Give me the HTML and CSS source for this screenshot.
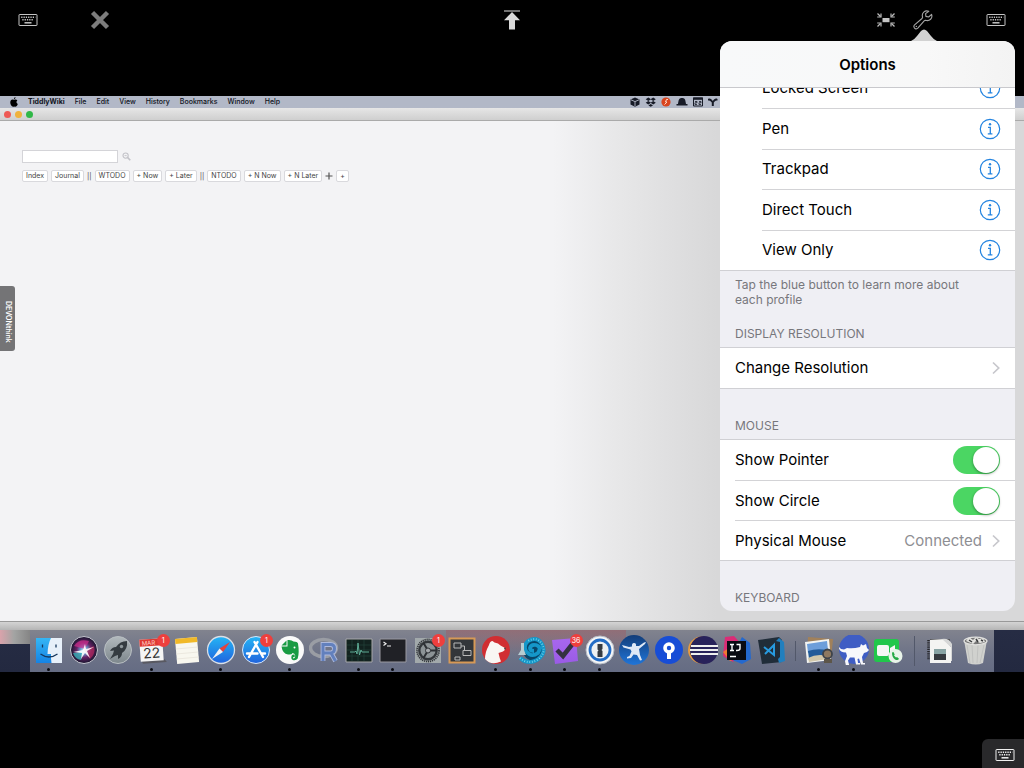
FILE: index.html
```html
<!DOCTYPE html>
<html lang="en">
<head>
<meta charset="utf-8">
<title>Remote desktop</title>
<link rel="stylesheet" href="styles.css">
</head>
<body>
<svg class="defs" aria-hidden="true">
  <defs>
    <symbol id="keyboard" viewBox="0 0 20 14">
      <rect x="1" y="1.500" width="18" height="11" rx=".5" fill="none" stroke="currentColor"/>
      <path d="M3.200 4.200h14" stroke="currentColor" stroke-width="1.400" stroke-dasharray="1.300 1"/>
      <path d="M4.300 6.800h11.500" stroke="currentColor" stroke-width="1.400" stroke-dasharray="1.300 1"/>
      <path d="M6.500 9.800h7" stroke="currentColor" stroke-width="1.500"/>
    </symbol>
    <symbol id="info" viewBox="0 0 22 22">
      <circle cx="11" cy="11" r="9.7" fill="none" stroke="#2484e0" stroke-width="1.2"/>
      <circle cx="11" cy="6.3" r="1.2" fill="#2484e0"/>
      <path d="M9 9.400h2.300v6.300M8.800 15.800h4.600" fill="none" stroke="#2484e0" stroke-width="1.300"/>
    </symbol>
    <symbol id="chevron" viewBox="0 0 8 14">
      <path d="M1 1.500l5.700 5.500L1 12.500" fill="none" stroke="#c7c7cc" stroke-width="1.700"/>
    </symbol>
    <linearGradient id="finderBlue" x2="0" y2="1"><stop stop-color="#35b6f5"/><stop offset="1" stop-color="#1583e4"/></linearGradient>
    <linearGradient id="sky" x2="0" y2="1"><stop stop-color="#25b5f5"/><stop offset="1" stop-color="#2063dd"/></linearGradient>
    <linearGradient id="metal" x2="0" y2="1"><stop stop-color="#b2b9bd"/><stop offset="1" stop-color="#7d878c"/></linearGradient>
    <linearGradient id="violet" x2="0" y2="1"><stop stop-color="#a867ee"/><stop offset="1" stop-color="#9a5be6"/></linearGradient>
    <linearGradient id="navy" x2="0" y2="1"><stop stop-color="#123d79"/><stop offset="1" stop-color="#2075d8"/></linearGradient>
    <radialGradient id="siri"><stop stop-color="#e8fbff"/><stop offset=".25" stop-color="#6a9cd0"/><stop offset=".55" stop-color="#662266"/><stop offset="1" stop-color="#15152c"/></radialGradient>
  </defs>
</svg>

<header class="toolbar">
  <div class="tools tools-left">
    <button class="tool" aria-label="Keyboard"><svg width="20" height="14"><use href="#keyboard"/></svg></button>
    <button class="tool" aria-label="Close"><svg width="20" height="20" viewBox="0 0 20 20"><path d="M2.500 2.500l15 15M17.500 2.500l-15 15" stroke="#7d7d7d" stroke-width="4.400"/></svg></button>
  </div>
  <button class="tool" aria-label="Scroll to top"><svg width="18" height="20" viewBox="0 0 18 20"><path d="M1 1h16" stroke="#8c8c8c" stroke-width="1.600"/><path d="M9 2l8 8.300h-5v9.200H6v-9.200H1z" fill="#dadada"/></svg></button>
  <div class="tools tools-right">
    <button class="tool" aria-label="Fit to screen"><svg width="20" height="16" viewBox="0 0 20 16"><path d="M6.500 6h7v4.200h-7z" fill="#c4c4c4"/><path d="M1.500 1.500l3 3M18.500 1.500l-3 3M1.500 14.500l3-3M18.500 14.500l-3-3" stroke="#bbb" stroke-width="1.300"/><path d="M5 1.500V5H1.200M15 1.500V5h3.800M5 14.500V11H1.200M15 14.500V11h3.800" fill="none" stroke="#bbb" stroke-width="1.200"/></svg></button>
    <button class="tool" aria-label="Options"><svg width="20" height="20" viewBox="0 0 20 20"><path d="M15.800 1.300C12-.2 8.200 3 9.600 7.200L9 8.500 1.600 14.800c-2 2 .9 5.500 3.200 3.400l6.400-7.400 1.400-.5c4 1.200 7.300-2 6-6l-3 2.700-2.700-.6-.3-2.800zM3.200 16.400h.3" fill="none" stroke="#a6a6a6" stroke-width="1.100" stroke-linejoin="round" stroke-linecap="round"/></svg></button>
    <button class="tool tool-last" aria-label="Keyboard options"><svg width="20" height="14"><use href="#keyboard"/></svg></button>
  </div>
</header>

<main class="desktop">
  <nav class="menubar">
    <svg class="apple" width="8" height="10" viewBox="0 0 8 10"><path d="M5.500 0Q5.600 1.700 3.900 2.200 3.800.6 5.500 0M4 2.900C5 2.300 6.500 2.200 7.400 3.500 5.900 4.400 6.300 6.400 7.800 7 7 9.200 6 10.200 4.200 9.500 2.500 10.300 1.400 9.100.6 7.200-.4 4.500 1 1.700 4 2.900z"/></svg>
    <b>TiddlyWiki</b><span>File</span><span>Edit</span><span>View</span><span>History</span><span>Bookmarks</span><span>Window</span><span>Help</span>
    <svg class="status" width="90" height="12" viewBox="0 0 90 12" fill="#171b27">
      <path d="M5 1.500l4.500 2v5L5 10.800.5 8.500v-5z"/><path d="M1 3.800l4 1.800 4-1.800M5 5.600v4.600" stroke="#b5bac8" stroke-width=".9" fill="none"/>
      <path d="M18.300 1.500L21 3.200l-2.700 1.700-2.600-1.700zm4.900 0l2.600 1.700-2.600 1.700L20.600 3.200zm-4.900 3.600L21 6.700l-2.700 1.700-2.600-1.700zm4.900 0l2.600 1.600-2.600 1.700-2.600-1.700zM20.700 8l2.300 1.400-2.300 1.400-2.300-1.400z"/>
      <circle cx="36" cy="6" r="4.600" fill="#d9451e"/><path d="M38 3.500h-1.500L35.500 6H37l-2.500 2.500" fill="none" stroke="#ffd9c8"/>
      <path d="M48 8c.6-4 .8-6 4-6s3.400 2 4 6h1.500v1.500h-11V8z"/>
      <path d="M63.500 2h9v8h-9z" fill="none" stroke="#171b27"/><path d="M63 1.500h10v2.300H63z"/><path d="M65 5.500h2v1.300h-2v1.700h2m2-3h2v1.300h-2v1.700h2" fill="none" stroke="#171b27" stroke-width=".8"/>
      <path d="M78 3c2-1.300 3.500.3 4.800 2 1.200-1.700 2.700-3.300 4.700-2v1.500c-2-.5-3 1-3.700 2V10h-2V6.500c-.8-1-1.800-2.500-3.800-2z"/>
    </svg>
  </nav>
  <div class="titlebar"><i class="dot red"></i><i class="dot amber"></i><i class="dot green"></i></div>
  <section class="wiki">
    <div class="search">
      <input class="search-box" type="text" aria-label="Search">
      <svg width="9" height="9" viewBox="0 0 10 10" fill="none" stroke="#c2c2c8"><circle cx="4" cy="4" r="2.900" stroke-width="1.200"/><path d="M6.300 6.300l2.900 2.900" stroke-width="1.800"/><path d="M2.800 4h2.400"/></svg>
    </div>
    <div class="tags">
      <button class="tag">Index</button><button class="tag">Journal</button><span>||</span>
      <button class="tag">WTODO</button><button class="tag">+ Now</button><button class="tag">+ Later</button><span>||</span>
      <button class="tag">NTODO</button><button class="tag">+ N Now</button><button class="tag">+ N Later</button>
      <svg width="8" height="8" viewBox="0 0 8 8"><path d="M4 .5v7M.5 4h7" stroke="#555" stroke-width="1.200"/></svg>
      <button class="tag">+</button>
    </div>
    <div class="side-tab">DEVONthink</div>
  </section>
  <div class="window-edge"></div>
  <div class="dock-area">
    <div class="dock">
      <div class="app running"><svg viewBox="0 0 30 30"><path d="M2 3h26v25H2z" fill="url(#finderBlue)"/><path d="M17 3h11v25H17.500q-.8-5-.5-9h-3.500q.3-10 3.500-16z" fill="#e7f0fa"/><path d="M8.500 9.500v3M22 9.500v3M6.500 19q8.500 6 17 0" fill="none" stroke="#16365c" stroke-width="1.300"/></svg></div>
      <div class="app"><svg viewBox="0 0 30 30"><circle cx="15" cy="15" r="13.500" fill="url(#siri)" stroke="#c6c6d0"/><path d="M5 11q5-8 15-5l-4 8z" fill="#d32d8e" opacity=".7"/><path d="M25 11q2 8-4 13l-6-9z" fill="#b4285c" opacity=".7"/><path d="M4 18q7 0 11-3l-3 10Q6 24 4 18z" fill="#35c7c8" opacity=".7"/><path d="M4 17l10-2 2-6 1 5 8-2-7 4 3 7-5-5-4 6 1-6z" fill="#fff" opacity=".9"/></svg></div>
      <div class="app"><svg viewBox="0 0 30 30"><circle cx="15" cy="15" r="13.500" fill="url(#metal)" stroke="#b9bfc3"/><path d="M24 6q-7 0-11 6-4 0-6 4l4-.5-1 3.500-3 5 5-3 3-1v4q4-2 4-6 6-4 5-12z" fill="#343b40"/><circle cx="18.500" cy="11.500" r="1.700" fill="#8d969a"/></svg></div>
      <div class="app running"><svg viewBox="0 0 30 30"><g transform="rotate(-4 15 15)"><path d="M4 25h23l2 3H5z" fill="#595961"/><path d="M3 4h23v22H3z" fill="#f5f5f5"/><path d="M3 4h23v7H3z" fill="#df3933"/><text x="12" y="10" class="cal-month">MAR</text><text x="14.500" y="23" class="cal-day">22</text></g></svg><span class="badge">1</span></div>
      <div class="app"><svg viewBox="0 0 30 30"><g transform="rotate(-5 15 15)"><path d="M4 3h22v25H4z" fill="#f8f7ef"/><path d="M4 3h22v5H4z" fill="#f1b928"/><path d="M4 13h22M4 18h22M4 23h22" stroke="#ebe8df"/></g></svg></div>
      <div class="app running"><svg viewBox="0 0 30 30"><circle cx="15" cy="15" r="13.500" fill="url(#sky)" stroke="#d9dfe7" stroke-width="1.300"/><path d="M24 7l-7 10-3.500-3.500z" fill="#e6423c"/><path d="M6 24l7.500-10.500L17 17z" fill="#f2f2f2"/></svg></div>
      <div class="app"><svg viewBox="0 0 30 30"><circle cx="15" cy="15" r="13.500" fill="url(#sky)" stroke="#d9e8fa"/><path d="M13.500 7l8.500 15M16.500 7L8 22M6 18.500h10.500M21 18.500h3" stroke="#fff" stroke-width="2.400" stroke-linecap="round"/></svg><span class="badge">1</span></div>
      <div class="app running"><svg viewBox="0 0 30 30"><circle cx="15" cy="15" r="14" fill="#fafafa"/><path d="M11.500 5.500v5H6.500zM12.500 5q4-.5 6 1.500 4 0 4.500 2 1.500 9-.3 15-1.700 2.500-5 1.500-2.200-1.500-1-4.500 1.500-1.500 3-.5v2h-1.500v1.500q2 0 2-3-.5-2.500-2.700-2.500-.5 2-4.500 1.500-5.500-1-6.500-8h6z" fill="#199b43"/><circle cx="19.500" cy="12.500" r="1" fill="#fff"/></svg></div>
      <div class="app"><svg viewBox="0 0 30 30"><ellipse cx="14.500" cy="13" rx="13" ry="8.500" fill="none" stroke="#9a9da4" stroke-width="3.500"/><path d="M14 26V9.500h7.500q4 0 4 4T22 18l4.500 8M14 18h8" fill="none" stroke="#aeb9dc" stroke-width="4.800"/><path d="M14 26V9.500h7.500q4 0 4 4T22 18l4.500 8M14 18h8" fill="none" stroke="#6280bd" stroke-width="3"/></svg></div>
      <div class="app running"><svg viewBox="0 0 30 30"><path d="M2 4h26v23H2z" fill="#12221f" stroke="#a8a8aa"/><path d="M3 10h24M3 15h24M3 21h24M8 5v21M14 5v21M20 5v21" stroke="#22423b" stroke-width=".7"/><path d="M6 17h5l1-1 1 3 1-11 1.500 12 1.500-5 1 2h7" fill="none" stroke="#5eac95"/></svg></div>
      <div class="app running"><svg viewBox="0 0 30 30"><path d="M2 4h26v23H2z" fill="#202126" stroke="#9999a0"/><path d="M5.500 7l2.500 1.800-2.500 1.700M9 11h4" fill="none" stroke="#eee" stroke-width="1.200"/></svg></div>
      <div class="app"><svg viewBox="0 0 30 30"><path d="M2 3h26v25H2z" fill="#a2a9ab"/><circle cx="15" cy="15.500" r="11" fill="none" stroke="#33363a" stroke-width="1.800" stroke-dasharray="1.200 .8"/><circle cx="15" cy="15.500" r="8.700" fill="#8c9396" stroke="#33373b" stroke-width="2.400"/><path d="M15 15.500h9M15 15.500L10.500 8M15 15.500L10.500 23" stroke="#2d3034" stroke-width="2"/><circle cx="15" cy="15.500" r="2.500" fill="#a5a9ac" stroke="#303338"/></svg><span class="badge">1</span></div>
      <div class="app"><svg viewBox="0 0 30 30"><path d="M2.500 3.500h25v24h-25z" fill="#33363a" stroke="#d79956" stroke-width="2"/><path d="M7 8h7v5H7zm9 7.500h8v5h-8zM8 22h5v3H8zm6-11h3.500v4.500" fill="none" stroke="#b8b8b8"/></svg></div>
      <div class="app running"><svg viewBox="0 0 30 30"><circle cx="15" cy="15" r="14" fill="#d12e32"/><path d="M4 24q0-7 4-14 1-4 3.500-4l2 1.500q4 .5 6 3l4.500 2.500q.5 2.500-2 3.500l-4.500 1.500q1 5 2.500 8.500Q10 31 4 24z" fill="#f9f6f3"/><circle cx="24" cy="13.500" r=".9" fill="#444"/></svg></div>
      <div class="app running"><svg viewBox="0 0 30 30"><circle cx="17.500" cy="14.500" r="11" fill="#08476a"/><path d="M4 23q8 7 17 2 10-7 5-16-5-8-14-3-5 5-2 10 5 7 12 2 4-6-2-8-5-1-6 3 0 3 4 3" fill="none" stroke="#1597c9" stroke-width="3.800"/><path d="M4 23q8 7 17 2 10-7 5-16-5-8-14-3" fill="none" stroke="#77d6eb" stroke-width="2" stroke-dasharray=".8 1.800"/><path d="M5 8h3v7l2 5H2l3-5z" fill="#b7ccd1"/></svg></div>
      <div class="app running"><svg viewBox="0 0 30 30"><path d="M2 5l24-2 2 23-23 3z" fill="url(#violet)"/><path d="M7 15l6 6L24 7" fill="none" stroke="#343141" stroke-width="4.500"/></svg><span class="badge">36</span></div>
      <div class="app running"><svg viewBox="0 0 30 30"><circle cx="15" cy="15" r="14" fill="#f4f5f7" stroke="#b6bcc5"/><circle cx="15" cy="15" r="10" fill="#eef0f2" stroke="#246cc5" stroke-width="2.800"/><path d="M12.500 9h5v5l-1 1 1 1v6h-5v-5.500l1-1-1-1z" fill="#353a42"/></svg></div>
      <div class="app"><svg viewBox="0 0 30 30"><circle cx="15" cy="15" r="15" fill="url(#navy)"/><path d="M3 10l7 2 3-.5q-.5-3.500 2-3.500t2 3l3 0 5-3.500 2-.5-1 2-6 5 1 6 2 5-2 .5-3-5.500-3.500-.5-2.500 3.500-4 .5v-1.500l2.500-1 2-4.500-1-2-7-2z" fill="#dfe9f6"/></svg></div>
      <div class="app"><svg viewBox="0 0 30 30"><circle cx="15" cy="15" r="14" fill="#174dd6"/><circle cx="15" cy="13" r="4" fill="none" stroke="#fff" stroke-width="3.600"/><path d="M13 17h4v7h-4z" fill="#fff"/></svg></div>
      <div class="app"><svg viewBox="0 0 30 30"><circle cx="13.500" cy="15" r="13.500" fill="#e69b42"/><circle cx="16" cy="15" r="14" fill="#28225a"/><path d="M3 11h27M2 15h28M3 19h27" stroke="#eee" stroke-width="1.900"/></svg></div>
      <div class="app"><svg viewBox="0 0 30 30"><path d="M3 2l9-1 9 10-10 16-10-6z" fill="#db2c76"/><path d="M20 2l8 6 1 16-9 5-12-5z" fill="#2469ce"/><path d="M1 17l7-5 7 11-7 3z" fill="#ef7a32"/><path d="M5 6h19v19H5z" fill="#090b12"/><path d="M8 9.500h4m-2 0v6m-2 0h4m2.500-6H18v4q0 2-3 2h-1M8 21.500h6" fill="none" stroke="#fff" stroke-width="1.400"/></svg></div>
      <div class="app"><svg viewBox="0 0 30 30"><path d="M1 5l21-3 3 3v22L5 29z" fill="#202d39"/><path d="M19 6l3-3 5 4 1 19-6 2-1-4 2-2V7z" fill="#217fbe"/><path d="M7 12l10 8V10L8 19" fill="none" stroke="#279be0" stroke-width="2"/></svg></div>
      <div class="divider"></div>
      <div class="app running"><svg viewBox="0 0 30 30"><path d="M4 2l25 2-2 22-24-3z" fill="#a1815b"/><path d="M1 7l24-3 2 21-24 3z" fill="#f3f4f2"/><path d="M3 9l20-3 1 9-20 3z" fill="#6d9eda"/><path d="M4 16q8-3 20-1l1 6-20 3z" fill="#245c99"/><path d="M4 23q9-5 20-2v3l-19 3z" fill="#d2c8ab"/><circle cx="23.500" cy="19" r="4.500" fill="#8e7960" stroke="#3e4349" stroke-width="1.800"/><path d="M20 24h8v4h-8z" fill="#5d5649"/></svg></div>
      <div class="app running"><svg viewBox="0 0 30 30"><circle cx="15" cy="14" r="15" fill="#3f5dc4"/><path d="M0 12q1.500 2.500 5 2.500l3-1.500q6 1 13-1l1-3 2 1.500 3-1.500 1 4 2 2-2 2-3 1-2 4 1 6h2v1.500h-4l-2-6-1.500.5.5 4h2v1.500h-4l-1.500-7H11l-2 3 1 4v1.500H7l-1-5 2-5-1-3.500q-6 0-7-4z" fill="#f8f8fb"/></svg></div>
      <div class="app"><svg viewBox="0 0 30 30"><rect x="1" y="4" width="25" height="23" rx="3" fill="#21c74b"/><rect x="4" y="10" width="12" height="11" rx="2" fill="#f5f7f5"/><path d="M17 13l5-3v8l-5 2z" fill="#f5f7f5"/><circle cx="22.500" cy="21" r="7" fill="#e9f4e9"/><path d="M19 17.500l1.500-.5 1.200 2.500-.7 1 2 2 1-.5 2 1.700q-1 2.300-4 .8-3-2-3-7z" fill="#25aa45"/></svg></div>
      <div class="divider divider-long"></div>
      <div class="app"><svg viewBox="0 0 30 30"><path d="M3.500 5v20" stroke="#252529" stroke-width="2.500" stroke-dasharray="1.200 1"/><path d="M5 4h20v5H5z" fill="#55565a"/><path d="M5 5l14-1 7 8v16H5z" fill="#f4f4f2"/><path d="M17 4q7-1 10 5v17h-1V12z" fill="#d6d7d7"/><path d="M9 14h12v11H9z" fill="#373b40"/><path d="M9 14h12v5H9z" fill="#89a4a4"/></svg></div>
      <div class="app"><svg viewBox="0 0 30 30"><path d="M4 5h23l-4 23q-7 3-15 0z" fill="#d0d1ce"/><path d="M7 10l3 18M12 10l1 18M18 10l-1 18M24 10l-4 18" stroke="#bbbdbb" stroke-width=".8"/><ellipse cx="15.500" cy="6" rx="11.500" ry="3.800" fill="#777" stroke="#e1e1df" stroke-width="1.200"/><path d="M6 6l3-4 4 3 3-3 3 2 4-1 2 4-5 1-4-2-3 3z" fill="#e2e2df"/><path d="M9 5l3 2m4-3l2 3m3-2l2 1" stroke="#393b3d" stroke-width="1.500"/></svg></div>
    </div>
  </div>
</main>

<aside class="popover">
  <div class="popover-arrow"></div>
  <h1 class="popover-title">Options</h1>
  <div class="popover-body">
    <div class="group profiles">
      <div class="row"><span>Locked Screen</span><button class="info" aria-label="About Locked Screen"><svg width="22" height="22"><use href="#info"/></svg></button></div>
      <div class="row"><span>Pen</span><button class="info" aria-label="About Pen"><svg width="22" height="22"><use href="#info"/></svg></button></div>
      <div class="row"><span>Trackpad</span><button class="info" aria-label="About Trackpad"><svg width="22" height="22"><use href="#info"/></svg></button></div>
      <div class="row"><span>Direct Touch</span><button class="info" aria-label="About Direct Touch"><svg width="22" height="22"><use href="#info"/></svg></button></div>
      <div class="row"><span>View Only</span><button class="info" aria-label="About View Only"><svg width="22" height="22"><use href="#info"/></svg></button></div>
    </div>
    <p class="note">Tap the blue button to learn more about each profile</p>
    <h2 class="section section-close">DISPLAY RESOLUTION</h2>
    <div class="group">
      <button class="row"><span>Change Resolution</span><svg width="8" height="14"><use href="#chevron"/></svg></button>
    </div>
    <h2 class="section">MOUSE</h2>
    <div class="group mouse">
      <label class="row"><span>Show Pointer</span><input class="switch" type="checkbox" checked></label>
      <label class="row"><span>Show Circle</span><input class="switch" type="checkbox" checked></label>
      <button class="row"><span>Physical Mouse</span><span class="value">Connected</span><svg width="8" height="14"><use href="#chevron"/></svg></button>
    </div>
    <h2 class="section">KEYBOARD</h2>
  </div>
</aside>

<button class="corner-key" aria-label="Show keyboard"><svg width="20" height="14"><use href="#keyboard"/></svg></button>
</body>
</html>
```
FILE: styles.css
```css
* { box-sizing: border-box; }
body {
  margin: 0;
  min-height: 100vh;
  background: #000;
  font-family: Inter, "Liberation Sans", sans-serif;
  color: #000;
  position: relative;
  overflow: hidden;
}
button { font: inherit; color: inherit; border: 0; padding: 0; background: none; }
.defs { position: absolute; width: 0; height: 0; }

.toolbar {
  display: grid;
  grid-template-columns: 1fr auto 1fr;
  align-items: center;
  height: 40px;
  padding: 0 18px;
  margin-bottom: 56px;
}
.tools { display: flex; align-items: center; }
.tools-left { gap: 52px; }
.tools-right { justify-content: flex-end; gap: 17px; }
.tool { color: #c4c4c4; display: flex; }
.tool-last { margin-left: 36px; }

.desktop { display: flex; flex-direction: column; }
.menubar {
  display: flex;
  align-items: center;
  gap: 10px;
  height: 12px;
  padding-left: 10px;
  background: #b2b8c7;
  font-size: 7px;
  font-weight: 500;
  line-height: 12px;
  color: #10131c;
}
.menubar b { font-weight: 700; }
.status { margin-left: auto; margin-right: 304px; }
.titlebar {
  display: flex;
  align-items: center;
  gap: 4px;
  height: 13px;
  padding-left: 4px;
  background: linear-gradient(#e6e6e6, #cfcfcf);
  border-bottom: 1px solid #aaa;
}
.dot { width: 7px; height: 7px; border-radius: 50%; }
.red { background: #ee5a55; }
.amber { background: #f0b23c; }
.green { background: #30b847; }

.wiki {
  position: relative;
  min-height: 500px;
  padding: 29px 22px;
  background: linear-gradient(90deg, #f3f3f5 0, #f3f3f5 54%, #e8e8e9 60%, #d8d8d9 70%, #d8d8d9 100%);
}
.search { display: flex; align-items: center; gap: 4px; }
.search-box { width: 96px; height: 13px; border: 1px solid #d4d4d8; background: #fff; font-size: 8px; }
.tags { display: flex; align-items: center; gap: 3px; margin-top: 7px; font-size: 7px; color: #444; }
.tag {
  height: 12px;
  padding: 0 3px;
  border: 1px solid #d9d9dd;
  border-radius: 2px;
  background: #fff;
  line-height: 10px;
}
.side-tab {
  position: absolute;
  left: 0;
  top: 165px;
  width: 15px;
  height: 65px;
  border-radius: 0 3px 3px 0;
  background: #747476;
  color: #fff;
  writing-mode: vertical-rl;
  font-size: 7px;
  font-weight: 600;
  line-height: 14px;
  padding-top: 15px;
}
.window-edge { height: 9px; background: linear-gradient(#d4d4d4, #b5b5b5); border-top: 1px solid #999; }
.dock-area {
  padding: 0 30px;
  background:
    linear-gradient(90deg, #d9a3ab, #a3a4a3 14px, #858585 30px) 0 0 / 30px 14px no-repeat,
    linear-gradient(#262c44, #232940);
}
.dock {
  display: flex;
  align-items: center;
  height: 42px;
  padding: 0 2px;
  background:
    linear-gradient(#a9505566, transparent 60%) 53% 0 / 180px 100% no-repeat,
    linear-gradient(#81838e, #6c7287 60%, #656c83);
}
.app { flex: 1; position: relative; display: flex; justify-content: center; padding-bottom: 2px; }
.app svg { width: 30px; height: 30px; flex: none; }
.running::after {
  content: "";
  position: absolute;
  left: 50%;
  bottom: -4px;
  width: 3px;
  height: 3px;
  margin-left: -2px;
  border-radius: 50%;
  background: #0b0c12;
}
.badge {
  position: absolute;
  right: 0;
  top: -1px;
  min-width: 13px;
  height: 13px;
  border-radius: 7px;
  background: #ee3f3d;
  color: #fff;
  font-size: 7px;
  line-height: 13px;
  text-align: center;
}
.cal-month { font-size: 6px; fill: #ffd0c8; text-anchor: middle; }
.cal-day { font-size: 14px; fill: #333; text-anchor: middle; }
.divider { width: 13px; height: 20px; background: linear-gradient(#52586a, #52586a) center / 1px 100% no-repeat; }
.divider-long { width: 18px; height: 30px; }

.popover {
  position: absolute;
  top: 41px;
  right: 9px;
  width: 295px;
  border-radius: 12px;
  background: #efeff4;
}
.popover-arrow {
  position: absolute;
  top: -12px;
  right: 78px;
  width: 26px;
  height: 12px;
  background: #d2d2d2;
  clip-path: path("M0 12Q3 11 6 7L10 2Q13 -1 16 2L20 7Q23 11 26 12Z");
}
.popover-title {
  margin: 0;
  height: 47px;
  border-radius: 12px 12px 0 0;
  border-bottom: 1px solid #c9c9cd;
  background: linear-gradient(90deg, #f8f9fa, #f8f8f8 70%, #f3f3f3);
  font-size: 15px;
  font-weight: 600;
  line-height: 47px;
  text-align: center;
}
.popover-body { overflow: hidden; border-radius: 0 0 12px 12px; }
.group {
  display: grid;
  grid-auto-rows: 1fr;
  min-height: 42px;
  padding-left: 15px;
  background: #fff;
  border-top: 1px solid #d0d0d4;
  border-bottom: 1px solid #d0d0d4;
}
.profiles { min-height: 204px; padding-left: 42px; margin-top: -21px; }
.mouse { min-height: 122px; }
.row {
  display: flex;
  align-items: center;
  gap: 10px;
  padding: 0 15px 0 0;
  font-size: 15px;
  line-height: 20px;
  text-align: left;
}
.row + .row { border-top: 1px solid #d3d3d6; }
.row > span:first-child { flex: 1; }
.info { display: flex; margin-right: -1px; }
.value { color: #8e8e93; }
.note { margin: 0; padding: 6px 40px 0 15px; font-size: 12px; line-height: 15px; color: #77777c; }
.section {
  margin: 0;
  padding: 29px 15px 5px;
  font-size: 12px;
  font-weight: 400;
  line-height: 16px;
  color: #77777c;
}
.section-close { padding-top: 19px; }
.switch {
  appearance: none;
  display: flex;
  width: 47px;
  height: 28px;
  margin: 0;
  padding: 1px;
  border-radius: 14px;
  background: #d8d8dc;
}
.switch::before {
  content: "";
  width: 26px;
  height: 26px;
  border-radius: 50%;
  background: #fff;
  box-shadow: 0 1px 3px #0006;
}
.switch:checked { background: #4bd663; justify-content: flex-end; }

.corner-key {
  position: absolute;
  right: 0;
  bottom: 0;
  width: 42px;
  height: 29px;
  padding: 3px 0 0 3px;
  display: grid;
  place-items: center;
  border-radius: 6px 0 0 0;
  background: #29292b;
  color: #f0f0f0;
}
```
